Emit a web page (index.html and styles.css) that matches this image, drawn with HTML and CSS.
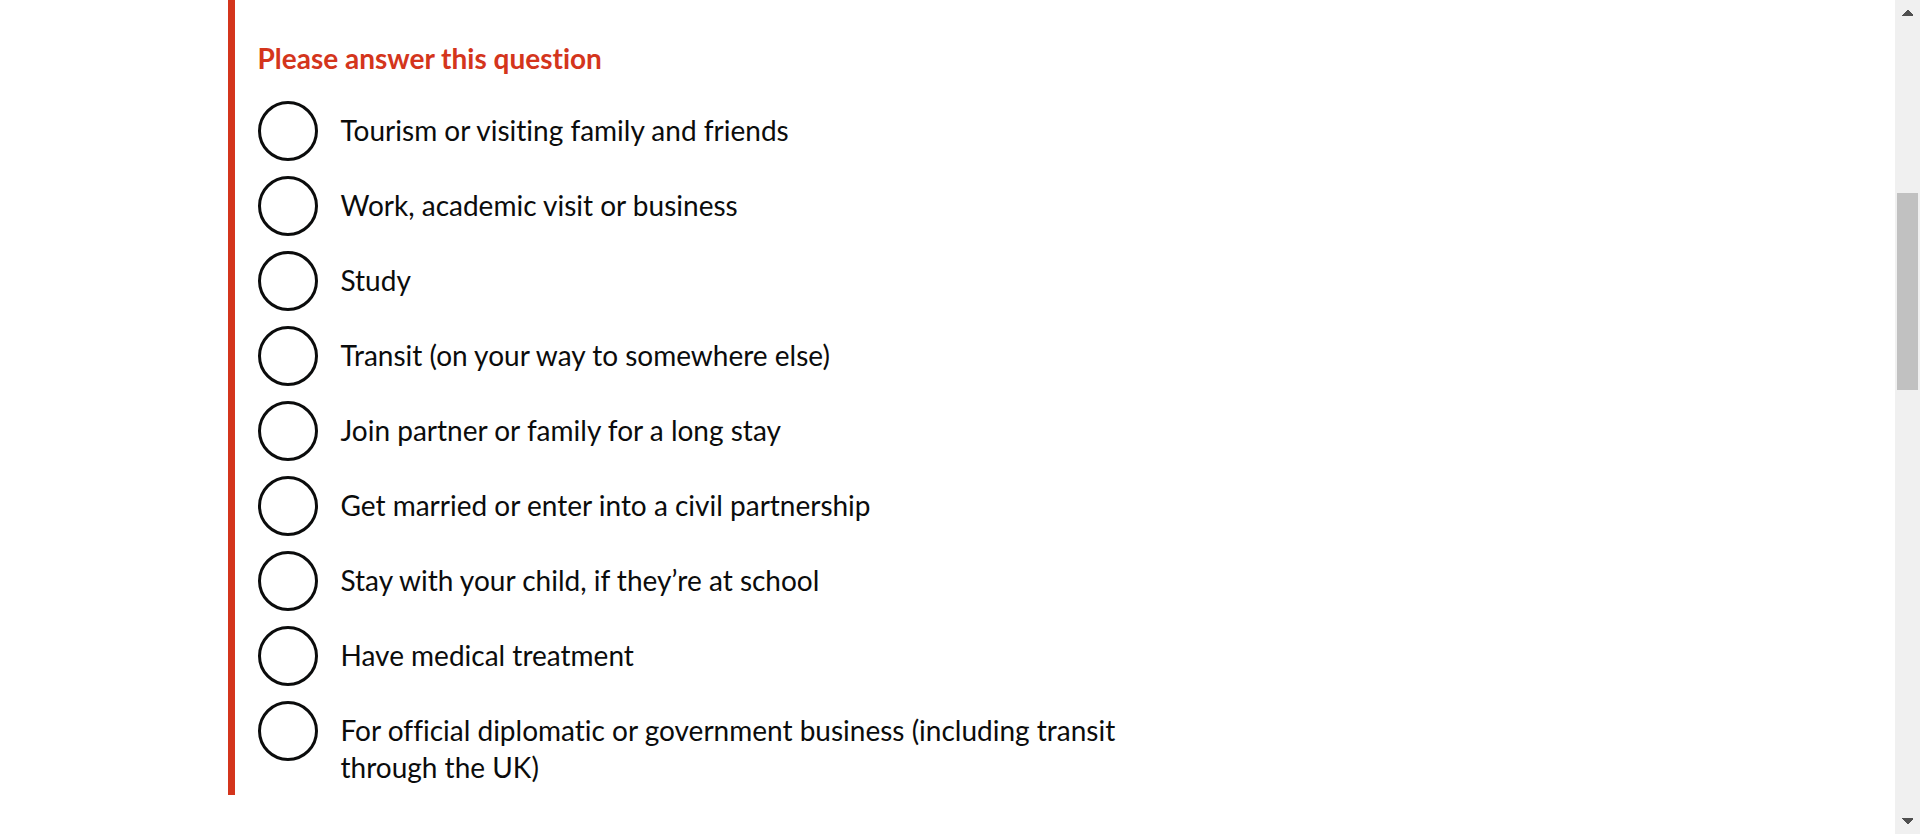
FILE: index.html
```html
<!DOCTYPE html>
<html lang="en">
<head>
<meta charset="utf-8">
<title>Reason for visit</title>
<meta name="viewport" content="width=device-width, initial-scale=1">
<link rel="stylesheet" href="styles.css">
</head>
<body class="page">
<main class="page-main">
  <div class="container">
    <form class="question">
      <fieldset class="group" aria-describedby="reason-error">
        <p class="error-message" id="reason-error">Please answer this question</p>
        <div class="radios">
          <div class="radio-item"><input class="radio-input" type="radio" name="reason" id="reason-1"><label class="radio-label" for="reason-1">Tourism or visiting family and friends</label></div>
          <div class="radio-item"><input class="radio-input" type="radio" name="reason" id="reason-2"><label class="radio-label" for="reason-2">Work, academic visit or business</label></div>
          <div class="radio-item"><input class="radio-input" type="radio" name="reason" id="reason-3"><label class="radio-label" for="reason-3">Study</label></div>
          <div class="radio-item"><input class="radio-input" type="radio" name="reason" id="reason-4"><label class="radio-label" for="reason-4">Transit (on your way to somewhere else)</label></div>
          <div class="radio-item"><input class="radio-input" type="radio" name="reason" id="reason-5"><label class="radio-label" for="reason-5">Join partner or family for a long stay</label></div>
          <div class="radio-item"><input class="radio-input" type="radio" name="reason" id="reason-6"><label class="radio-label" for="reason-6">Get married or enter into a civil partnership</label></div>
          <div class="radio-item"><input class="radio-input" type="radio" name="reason" id="reason-7"><label class="radio-label" for="reason-7">Stay with your child, if they’re at school</label></div>
          <div class="radio-item"><input class="radio-input" type="radio" name="reason" id="reason-8"><label class="radio-label" for="reason-8">Have medical treatment</label></div>
          <div class="radio-item"><input class="radio-input" type="radio" name="reason" id="reason-9"><label class="radio-label" for="reason-9">For official diplomatic or government business (including transit through the UK)</label></div>
        </div>
      </fieldset>
    </form>
  </div>
</main>
<div class="scrollbar" aria-hidden="true">
  <svg class="scroll-arrow" viewBox="0 0 25 25" shape-rendering="crispEdges"><path d="M7 16V15L12 10H13L18 15V16Z"/></svg>
  <div class="scroll-track">
    <div class="scroll-before"></div>
    <div class="scroll-thumb"></div>
    <div class="scroll-after"></div>
  </div>
  <svg class="scroll-arrow" viewBox="0 0 25 25" shape-rendering="crispEdges"><path d="M7 9V10L12 15H13L18 10V9Z"/></svg>
</div>
</body>
</html>
```
FILE: styles.css
```css
* {
  box-sizing: border-box;
}

.page {
  display: flex;
  min-height: 100vh;
  margin: 0;
  background: #fff;
  color: #0b0c0c;
  font-family: Lato, "Noto Sans", sans-serif;
  font-size: 28px;
  font-variant-ligatures: none;
  line-height: 37px;
}

.page-main {
  flex: 1;
  min-width: 0;
}

.container {
  max-width: 1440px;
  margin: 0 auto;
}

.question {
  max-width: 945px;
  border-left: 7px solid #d4351c;
}

.group {
  min-width: 0;
  margin: 0;
  padding: 40px 0 0 23px;
  border: 0;
}

.error-message {
  margin: 0 0 24px;
  color: #d4351c;
  font-weight: 700;
}

.radios {
  display: flex;
  flex-direction: column;
  gap: 15px;
}

.radio-item {
  display: flex;
  align-items: flex-start;
  min-height: 60px;
}

.radio-input {
  flex: none;
  width: 60px;
  height: 60px;
  margin: 0;
  appearance: none;
  border: 3px solid #0b0c0c;
  border-radius: 50%;
  background: #fff;
  cursor: pointer;
}

.radio-input:focus-visible {
  outline: 4px solid #fd0;
}

.radio-input:checked {
  background: radial-gradient(#0b0c0c 15px, #fff 16px);
}

.radio-label {
  padding: 11px 23px 9px;
  cursor: pointer;
}

.scrollbar {
  display: flex;
  flex: none;
  flex-direction: column;
  width: 25px;
  background: #f0f0f0;
}

.scroll-arrow {
  display: block;
  width: 25px;
  height: 25px;
  fill: #505050;
}

.scroll-track {
  display: flex;
  flex: 1;
  flex-direction: column;
  padding: 0 2px;
}

.scroll-before {
  flex: 168;
}

.scroll-thumb {
  flex: 197;
  background: #c1c1c1;
}

.scroll-after {
  flex: 419;
}
```
